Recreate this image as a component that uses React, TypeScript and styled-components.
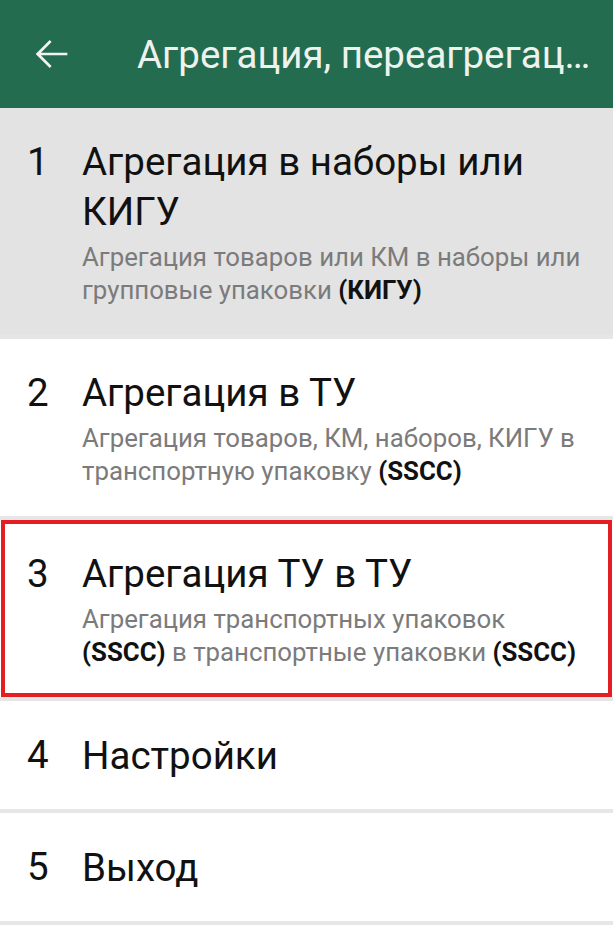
import React from "react";
import styled, { createGlobalStyle } from "styled-components";

const Global = createGlobalStyle`
  html, body { margin: 0; padding: 0; background: #ffffff; }
  body { font-family: Roboto, "Noto Sans", "Liberation Sans", sans-serif; }
  * { box-sizing: border-box; }
`;

const Screen = styled.div`
  width: 613px;
  min-height: 947px;
  background: #ffffff;
  display: flex;
  flex-direction: column;
`;

const Header = styled.header`
  height: 108px;
  background: #236c4f;
  display: flex;
  align-items: center;
  padding-left: 29px;
  padding-right: 16px;
  gap: 62px;
`;

const BackButton = styled.button`
  border: 0;
  background: transparent;
  padding: 0;
  width: 46px;
  height: 46px;
  display: flex;
  align-items: center;
  justify-content: center;
  color: #f3f3f3;
  flex: none;
`;

const HeaderTitle = styled.h1`
  margin: 0;
  font-size: 38.5px;
  font-weight: 400;
  color: #eef2ef;
  white-space: nowrap;
  overflow: hidden;
  text-overflow: ellipsis;
  flex: 1;
  min-width: 0;
`;

const List = styled.ul`
  list-style: none;
  margin: 0;
  padding: 0;
`;

const Row = styled.li<{ $selected?: boolean }>`
  background: ${(p) => (p.$selected ? "#e3e3e3" : "#ffffff")};
  border-bottom: 4px solid #e6e6e6;
`;

const Content = styled.div<{ $highlight?: boolean }>`
  display: flex;
  align-items: center;
  min-height: 108px;
  padding: 29px 20px 28px 0;
  margin: 0 1px;
  box-shadow: ${(p) => (p.$highlight ? "inset 0 0 0 4px #e31e24" : "none")};
`;

const Num = styled.div`
  width: 81px;
  padding-left: 26px;
  align-self: flex-start;
  font-size: 38.5px;
  line-height: 50px;
  color: #111111;
  flex: none;
`;

const Texts = styled.div`
  display: flex;
  flex-direction: column;
  gap: 4px;
  min-width: 0;
`;

const Title = styled.div`
  font-size: 38.5px;
  line-height: 50px;
  color: #111111;
`;

const Sub = styled.div`
  font-size: 25.8px;
  line-height: 33px;
  color: #7b7b7b;
  b {
    color: #111111;
    font-weight: 700;
  }
`;

const ArrowIcon = () => (
  <svg width="46" height="46" viewBox="0 0 24 24" fill="currentColor">
    <path d="M20 11.3H6.2l5.6-5.6-1-1L3.5 12l7.3 7.3 1-1-5.6-5.6H20z" />
  </svg>
);

const items: { n: number; title: string; sub?: React.ReactNode; selected?: boolean; highlight?: boolean }[] = [
  {
    n: 1,
    title: "Агрегация в наборы или КИГУ",
    sub: (
      <>
        Агрегация товаров или КМ в наборы или групповые упаковки <b>(КИГУ)</b>
      </>
    ),
    selected: true,
  },
  {
    n: 2,
    title: "Агрегация в ТУ",
    sub: (
      <>
        Агрегация товаров, КМ, наборов, КИГУ в транспортную упаковку <b>(SSCC)</b>
      </>
    ),
  },
  {
    n: 3,
    title: "Агрегация ТУ в ТУ",
    sub: (
      <>
        Агрегация транспортных упаковок <b>(SSCC)</b> в транспортные упаковки <b>(SSCC)</b>
      </>
    ),
    highlight: true,
  },
  { n: 4, title: "Настройки" },
  { n: 5, title: "Выход" },
];

export default function App() {
  return (
    <Screen>
      <Global />
      <Header>
        <BackButton aria-label="Назад">
          <ArrowIcon />
        </BackButton>
        <HeaderTitle>Агрегация, переагрегация и расформирование</HeaderTitle>
      </Header>
      <List>
        {items.map((it) => (
          <Row key={it.n} $selected={it.selected}>
            <Content $highlight={it.highlight}>
              <Num>{it.n}</Num>
              <Texts>
                <Title>{it.title}</Title>
                {it.sub && <Sub>{it.sub}</Sub>}
              </Texts>
            </Content>
          </Row>
        ))}
      </List>
    </Screen>
  );
}
